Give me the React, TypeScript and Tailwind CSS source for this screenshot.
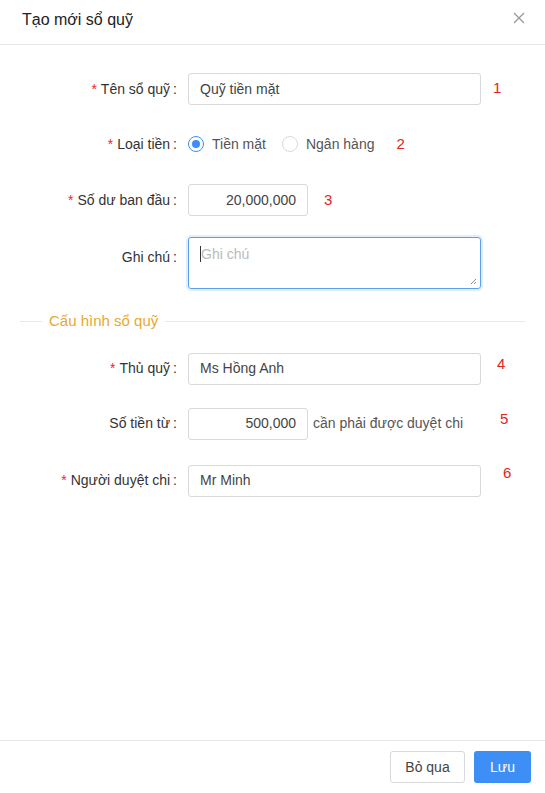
import React from "react";

const font = { fontFamily: '"Liberation Sans", Arial, sans-serif' };

function Label({ text, required }: { text: string; required?: boolean }) {
  return (
    <div className="w-[180px] shrink-0 pr-[3px] text-right text-[14px] text-[#333]">
      {required && <span className="mr-1 text-[#f5222d]">*</span>}
      {text}
      <span className="ml-[3px]">:</span>
    </div>
  );
}

function Mark({ n, className }: { n: string; className?: string }) {
  return <span className={`text-[15px] text-[#e2231a] ${className ?? ""}`}>{n}</span>;
}

export default function App() {
  return (
    <div className="flex h-[793px] w-[545px] flex-col bg-white" style={font}>
      <div className="flex h-[45px] shrink-0 items-center justify-between border-b border-[#e8e8e8] pl-[22px] pr-[20px]">
        <span className="pb-[4px] text-[16px] text-[#222]">Tạo mới sổ quỹ</span>
        <svg width="12" height="12" viewBox="0 0 12 12" className="mb-[8px]">
          <path d="M1 1L11 11M11 1L1 11" stroke="#999" strokeWidth="1.3" />
        </svg>
      </div>

      <div className="flex-1 pt-[28px]">
        <div className="flex h-[32px] items-center">
          <Label text="Tên sổ quỹ" required />
          <div className="ml-[8px] flex h-[32px] w-[293px] items-center rounded-[3px] border border-[#d9d9d9] px-[11px] text-[14px] text-[#444]">
            Quỹ tiền mặt
          </div>
          <Mark n="1" className="ml-[12px] -mt-[2px]" />
        </div>

        <div className="mt-[23px] flex h-[32px] items-center">
          <Label text="Loại tiền" required />
          <div className="ml-[8px] flex items-center text-[14px] text-[#555]">
            <span className="flex h-[16px] w-[16px] items-center justify-center rounded-full border border-[#3d8ff5]">
              <span className="h-[8px] w-[8px] rounded-full bg-[#3d8ff5]" />
            </span>
            <span className="ml-[8px]">Tiền mặt</span>
            <span className="ml-[16px] h-[16px] w-[16px] rounded-full border border-[#d9d9d9]" />
            <span className="ml-[8px]">Ngân hàng</span>
          </div>
          <Mark n="2" className="ml-[22px]" />
        </div>

        <div className="mt-[24px] flex h-[32px] items-center">
          <Label text="Số dư ban đầu" required />
          <div className="ml-[8px] flex h-[32px] w-[120px] items-center justify-end rounded-[3px] border border-[#d9d9d9] px-[11px] text-[14px] text-[#444]">
            20,000,000
          </div>
          <Mark n="3" className="ml-[16px]" />
        </div>

        <div className="mt-[21px] flex items-start">
          <div className="mt-[10px]">
            <Label text="Ghi chú" />
          </div>
          <div className="relative ml-[8px] h-[52px] w-[293px] rounded-[3px] border border-[#5aa0f0] px-[12px] pt-[6px] text-[14px] text-[#bbb] shadow-[0_0_0_2px_rgba(61,143,245,0.15)]">
            <span className="absolute left-[11px] top-[8px] h-[16px] w-px bg-[#333]" />
            Ghi chú
            <svg width="7" height="7" viewBox="0 0 7 7" className="absolute bottom-[3px] right-[3px]">
              <path d="M1 6L6 1M4 6L6 4" stroke="#888" strokeWidth="1" />
            </svg>
          </div>
        </div>

        <div className="mx-[20px] mt-[21px] flex items-center">
          <div className="h-px w-[22px] bg-[#e8e8e8]" />
          <span className="px-[7px] text-[15px] text-[#e8a833]">Cấu hình sổ quỹ</span>
          <div className="h-px flex-1 bg-[#e8e8e8]" />
        </div>

        <div className="mt-[20px] flex h-[32px] items-center">
          <Label text="Thủ quỹ" required />
          <div className="ml-[8px] flex h-[32px] w-[293px] items-center rounded-[3px] border border-[#d9d9d9] px-[11px] text-[14px] text-[#444]">
            Ms Hồng Anh
          </div>
          <Mark n="4" className="ml-[16px] -mt-[8px]" />
        </div>

        <div className="mt-[23px] flex h-[32px] items-center">
          <Label text="Số tiền từ" />
          <div className="ml-[8px] flex h-[32px] w-[120px] items-center justify-end rounded-[3px] border border-[#d9d9d9] px-[11px] text-[14px] text-[#444]">
            500,000
          </div>
          <span className="ml-[5px] text-[14px] text-[#555]">cần phải được duyệt chi</span>
          <Mark n="5" className="ml-[37px] -mt-[9px]" />
        </div>

        <div className="mt-[25px] flex h-[32px] items-center">
          <Label text="Người duyệt chi" required />
          <div className="ml-[8px] flex h-[32px] w-[293px] items-center rounded-[3px] border border-[#d9d9d9] px-[11px] text-[14px] text-[#444]">
            Mr Minh
          </div>
          <Mark n="6" className="ml-[22px] -mt-[14px]" />
        </div>
      </div>

      <div className="flex h-[53px] shrink-0 items-center justify-end gap-[9px] border-t border-[#e8e8e8] pr-[14px]">
        <button className="h-[32px] w-[75px] rounded-[3px] border border-[#d9d9d9] bg-white text-[14px] text-[#444]">
          Bỏ qua
        </button>
        <button className="h-[32px] w-[57px] rounded-[3px] bg-[#3d8ff5] text-[14px] text-white">
          Lưu
        </button>
      </div>
    </div>
  );
}
